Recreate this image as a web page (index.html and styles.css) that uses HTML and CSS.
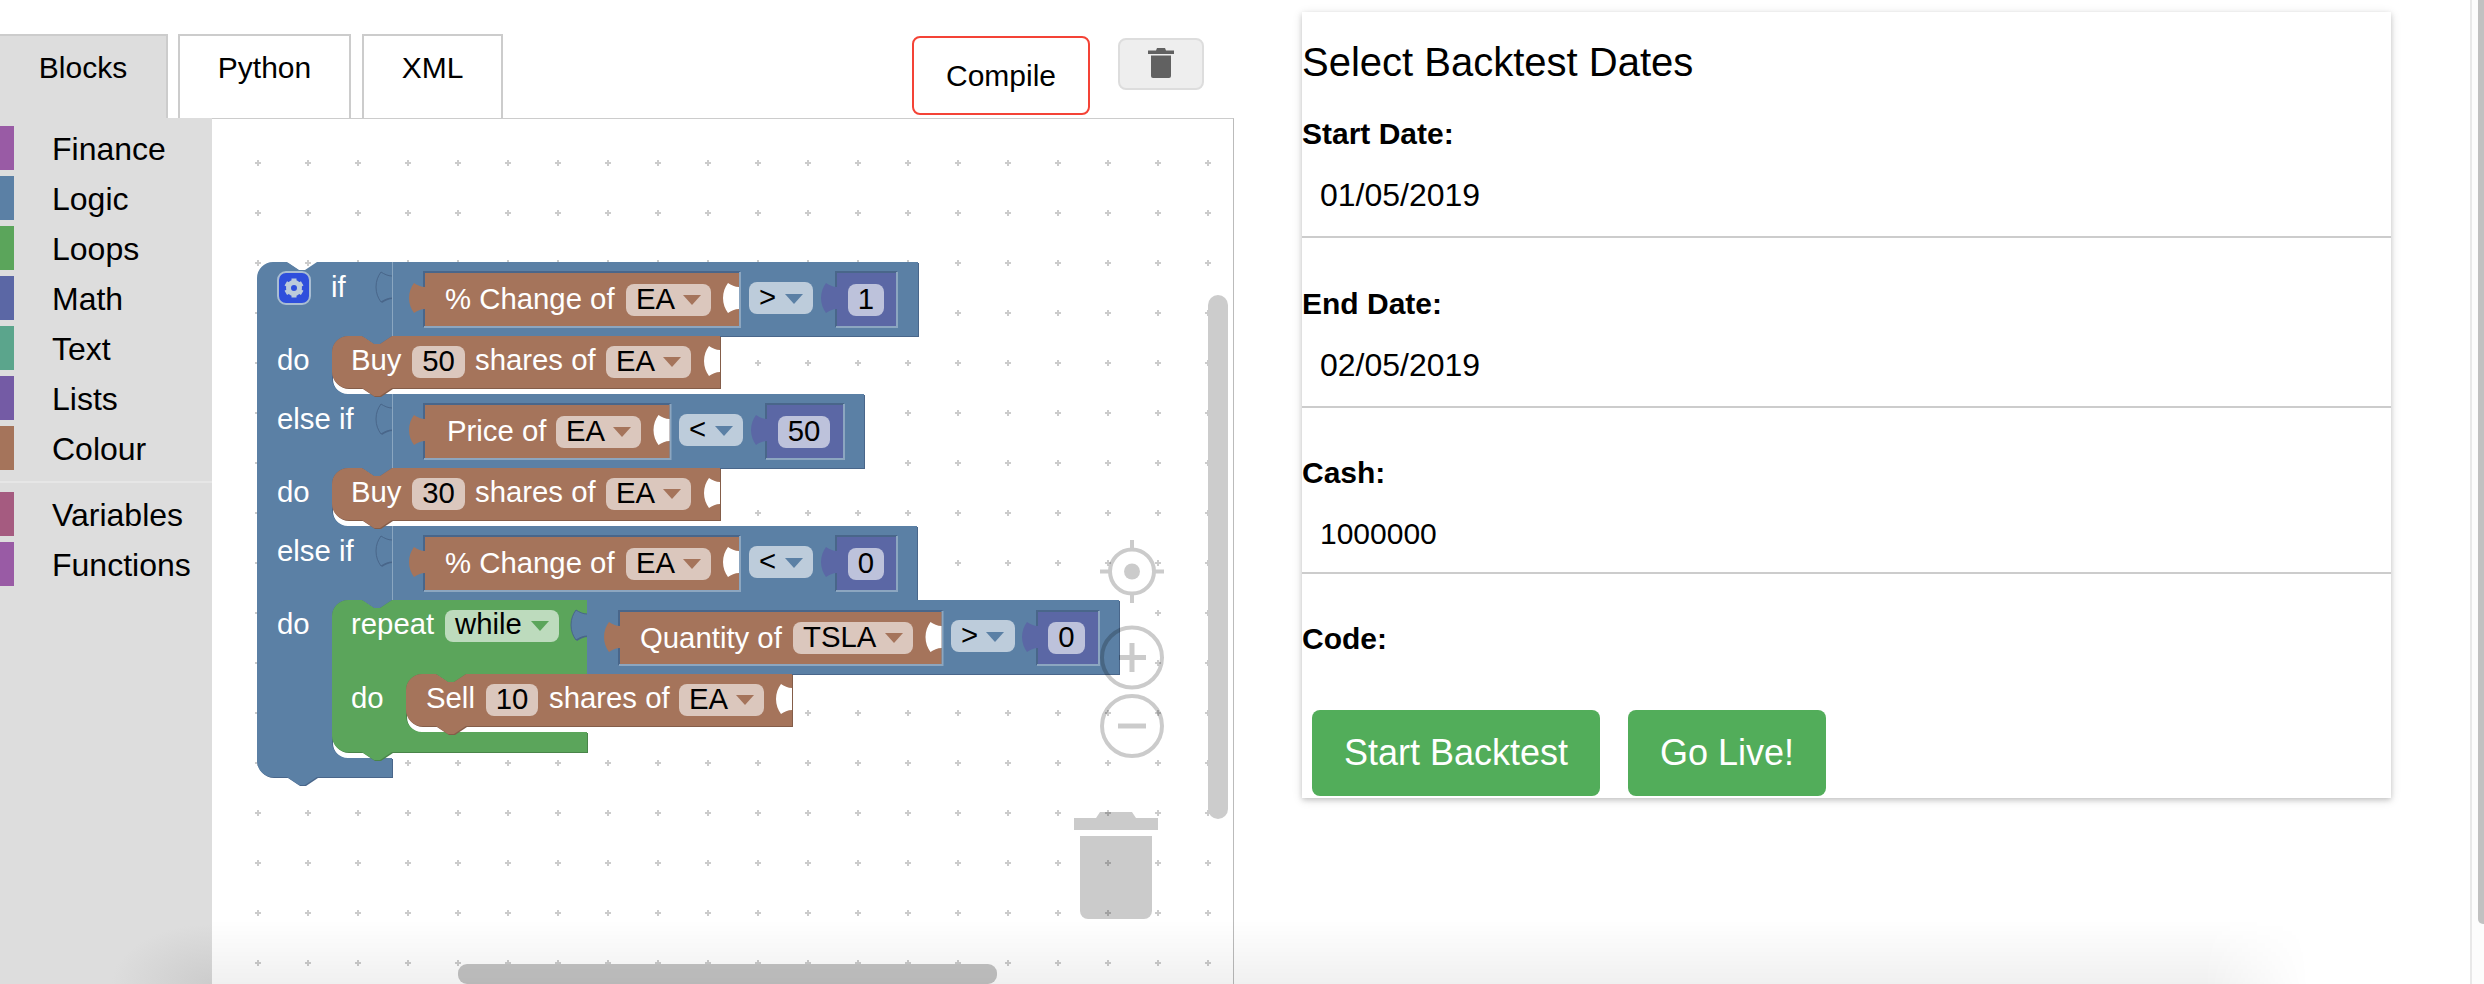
FILE: index.html
```html
<!DOCTYPE html>
<html lang="en">
<head>
<meta charset="utf-8">
<title>Select Backtest Dates</title>
<link rel="stylesheet" href="styles.css">
</head>
<body>
<div class="page">
  <section class="editor">
    <div class="tabbar">
      <div class="tab tab-blocks">Blocks</div>
      <div class="tab tab-python">Python</div>
      <div class="tab tab-xml">XML</div>
      <button class="compile">Compile</button>
      <button class="clear">
        <svg class="clear-icon" viewBox="0 0 26 30"><path d="M0 2.5h8l1-2.5h8l1 2.5h8v3.5H0z"/><path d="M3 7.500h20v20.500a2 2 0 0 1-2 2H5a2 2 0 0 1-2-2z"/></svg>
      </button>
    </div>
    <div class="editor-body">
      <nav class="toolbox">
        <div class="cat"><span class="swatch c-finance"></span><span class="cat-label">Finance</span></div>
        <div class="cat"><span class="swatch c-logic"></span><span class="cat-label">Logic</span></div>
        <div class="cat"><span class="swatch c-loops"></span><span class="cat-label">Loops</span></div>
        <div class="cat"><span class="swatch c-math"></span><span class="cat-label">Math</span></div>
        <div class="cat"><span class="swatch c-text"></span><span class="cat-label">Text</span></div>
        <div class="cat"><span class="swatch c-lists"></span><span class="cat-label">Lists</span></div>
        <div class="cat"><span class="swatch c-colour"></span><span class="cat-label">Colour</span></div>
        <div class="cat-sep"></div>
        <div class="cat"><span class="swatch c-variables"></span><span class="cat-label">Variables</span></div>
        <div class="cat"><span class="swatch c-finance"></span><span class="cat-label">Functions</span></div>
      </nav>
      <div class="workspace">
        <svg class="canvas" viewBox="212 119 1021 865" width="1021" height="865">
          <defs>
            <pattern id="grid" patternUnits="userSpaceOnUse" x="233" y="138" width="50" height="50">
              <path class="grid-dot" d="M22 25h6M25 22v6"/>
            </pattern>
          </defs>
          <rect x="212" y="119" width="1021" height="865" fill="url(#grid)"/>

          <!-- if / else-if spine -->
          <path class="blk blue" d="M257 278a16 16 0 0 1 16-16h14l12 8h6l12-8H392V336l-12 8h-6l-12-8H348a16 16 0 0 0-16 16V378a16 16 0 0 0 16 16H392V468l-12 8h-6l-12-8H348a16 16 0 0 0-16 16V510a16 16 0 0 0 16 16H392V600l-12 8h-6l-12-8H348a16 16 0 0 0-16 16V742a16 16 0 0 0 16 16H392V777H317l-12 8h-6l-12-8H273a16 16 0 0 1-16-16z"/>

          <!-- compare blocks -->
          <path class="blk blue" d="M392 262H918V336H392V298c-4 0-8 2-11 4c-3-4-5-9-5-15c0-6 2-11 5-15c3 2 7 4 11 4z"/>
          <path class="blk blue" d="M392 394H864V468H392V430c-4 0-8 2-11 4c-3-4-5-9-5-15c0-6 2-11 5-15c3 2 7 4 11 4z"/>
          <path class="blk blue" d="M392 526H917V600H392V562c-4 0-8 2-11 4c-3-4-5-9-5-15c0-6 2-11 5-15c3 2 7 4 11 4z"/>
          <path class="edge" d="M392 298c-4 0-8 2-11 4c-3-4-5-9-5-15c0-6 2-11 5-15c3 2 7 4 11 4M392 430c-4 0-8 2-11 4c-3-4-5-9-5-15c0-6 2-11 5-15c3 2 7 4 11 4M392 562c-4 0-8 2-11 4c-3-4-5-9-5-15c0-6 2-11 5-15c3 2 7 4 11 4"/>
          <path class="seam" d="M392.500 262V336M392.500 394V468M392.500 526V600"/>

          <!-- do: Buy 50 -->
          <path class="blk brown" d="M332 352a16 16 0 0 1 16-16h14l12 8h6l12-8H720V388H392l-12 8h-6l-12-8H348a16 16 0 0 1-16-16z"/>
          <path class="hole" d="M720 372c-4 0-8 2-11 4c-3-4-5-9-5-15c0-6 2-11 5-15c3 2 7 4 11 4z"/>
          <!-- do: Buy 30 -->
          <path class="blk brown" d="M332 484a16 16 0 0 1 16-16h14l12 8h6l12-8H720V520H392l-12 8h-6l-12-8H348a16 16 0 0 1-16-16z"/>
          <path class="hole" d="M720 504c-4 0-8 2-11 4c-3-4-5-9-5-15c0-6 2-11 5-15c3 2 7 4 11 4z"/>

          <!-- repeat while -->
          <path class="blk green" d="M332 616a16 16 0 0 1 16-16h14l12 8h6l12-8H587V674H466l-12 8h-6l-12-8H422a16 16 0 0 0-16 16V716a16 16 0 0 0 16 16H587V752H392l-12 8h-6l-12-8H348a16 16 0 0 1-16-16z"/>
          <path class="blk blue" d="M587 600H1119V674H587V636c-4 0-8 2-11 4c-3-4-5-9-5-15c0-6 2-11 5-15c3 2 7 4 11 4z"/>
          <path class="edge" d="M587 636c-4 0-8 2-11 4c-3-4-5-9-5-15c0-6 2-11 5-15c3 2 7 4 11 4"/>
          <path class="blk brown" d="M406 690a16 16 0 0 1 16-16h14l12 8h6l12-8H792V726H466l-12 8h-6l-12-8H422a16 16 0 0 1-16-16z"/>
          <path class="hole" d="M792 710c-4 0-8 2-11 4c-3-4-5-9-5-15c0-6 2-11 5-15c3 2 7 4 11 4z"/>

          <!-- sockets: dark top/left, light bottom/right -->
          <path class="sock-d" d="M424 327V272H740M836 327V272H897M424 459V404H670.500M766 459V404H844M424 591V536H740M836 591V536H897M619 665V611H942.500M1037 665V611H1099"/>
          <path class="sock-l" d="M740 272V327H424M897 272V327H836M670.500 404V459H424M844 404V459H766M740 536V591H424M897 536V591H836M942.500 611V665H619M1099 611V665H1037"/>

          <!-- value blocks -->
          <path class="brown" d="M425 273H739V326H425V309c-4 0-8 2-11 4c-3-4-5-9-5-15c0-6 2-11 5-15c3 2 7 4 11 4z"/>
          <path class="hole" d="M739 309c-4 0-8 2-11 4c-3-4-5-9-5-15c0-6 2-11 5-15c3 2 7 4 11 4z"/>
          <path class="math" d="M837 273H896V326H837V309c-4 0-8 2-11 4c-3-4-5-9-5-15c0-6 2-11 5-15c3 2 7 4 11 4z"/>
          <path class="brown" d="M425 405H669.500V458H425V441c-4 0-8 2-11 4c-3-4-5-9-5-15c0-6 2-11 5-15c3 2 7 4 11 4z"/>
          <path class="hole" d="M669.500 441c-4 0-8 2-11 4c-3-4-5-9-5-15c0-6 2-11 5-15c3 2 7 4 11 4z"/>
          <path class="math" d="M767 405H843V458H767V441c-4 0-8 2-11 4c-3-4-5-9-5-15c0-6 2-11 5-15c3 2 7 4 11 4z"/>
          <path class="brown" d="M425 537H739V590H425V573c-4 0-8 2-11 4c-3-4-5-9-5-15c0-6 2-11 5-15c3 2 7 4 11 4z"/>
          <path class="hole" d="M739 573c-4 0-8 2-11 4c-3-4-5-9-5-15c0-6 2-11 5-15c3 2 7 4 11 4z"/>
          <path class="math" d="M837 537H896V590H837V573c-4 0-8 2-11 4c-3-4-5-9-5-15c0-6 2-11 5-15c3 2 7 4 11 4z"/>
          <path class="brown" d="M620 612H941.500V664H620V648c-4 0-8 2-11 4c-3-4-5-9-5-15c0-6 2-11 5-15c3 2 7 4 11 4z"/>
          <path class="hole" d="M941.500 648c-4 0-8 2-11 4c-3-4-5-9-5-15c0-6 2-11 5-15c3 2 7 4 11 4z"/>
          <path class="math" d="M1038 612H1098V664H1038V648c-4 0-8 2-11 4c-3-4-5-9-5-15c0-6 2-11 5-15c3 2 7 4 11 4z"/>

          <!-- mutator -->
          <rect class="gear-box" x="278" y="272" width="32" height="32" rx="8"/>
          <g class="gear">
            <path d="M294 278.500v19M285.800 283.300l16.400 9.500M285.800 292.800l16.400-9.500"/>
            <circle class="gear-ring" cx="294" cy="288" r="5.500"/>
          </g>

          <!-- labels -->
          <text class="lbl" x="331" y="296">if</text>
          <text class="lbl" x="277" y="369">do</text>
          <text class="lbl" x="277" y="428">else if</text>
          <text class="lbl" x="277" y="501">do</text>
          <text class="lbl" x="277" y="560">else if</text>
          <text class="lbl" x="277" y="633">do</text>

          <!-- row 1 -->
          <text class="lbl" x="445" y="308">% Change of</text>
          <rect class="f-brown" x="626" y="284" width="85" height="32" rx="8"/>
          <text class="val" x="636" y="308">EA</text>
          <path class="brown" d="M683 295h18l-9 10z"/>
          <rect class="f-blue" x="749" y="282" width="64" height="32" rx="8"/>
          <text class="val" x="759" y="306">&gt;</text>
          <path class="blue" d="M785 294h18l-9 10z"/>
          <rect class="f-math" x="848" y="284" width="36" height="32" rx="8"/>
          <text class="val mid" x="866" y="308">1</text>

          <!-- Buy 50 -->
          <text class="lbl" x="351" y="369">Buy</text>
          <rect class="f-brown" x="412" y="346" width="53" height="32" rx="8"/>
          <text class="val mid" x="438.500" y="370">50</text>
          <text class="lbl" x="475" y="369">shares of</text>
          <rect class="f-brown" x="606" y="346" width="85" height="32" rx="8"/>
          <text class="val" x="616" y="370">EA</text>
          <path class="brown" d="M663 357h18l-9 10z"/>

          <!-- row 2 -->
          <text class="lbl" x="447" y="440">Price of</text>
          <rect class="f-brown" x="556" y="416" width="85" height="32" rx="8"/>
          <text class="val" x="566" y="440">EA</text>
          <path class="brown" d="M613 427h18l-9 10z"/>
          <rect class="f-blue" x="679" y="414" width="64" height="32" rx="8"/>
          <text class="val" x="689" y="438">&lt;</text>
          <path class="blue" d="M715 426h18l-9 10z"/>
          <rect class="f-math" x="778" y="416" width="52" height="32" rx="8"/>
          <text class="val mid" x="804" y="440">50</text>

          <!-- Buy 30 -->
          <text class="lbl" x="351" y="501">Buy</text>
          <rect class="f-brown" x="412" y="478" width="53" height="32" rx="8"/>
          <text class="val mid" x="438.500" y="502">30</text>
          <text class="lbl" x="475" y="501">shares of</text>
          <rect class="f-brown" x="606" y="478" width="85" height="32" rx="8"/>
          <text class="val" x="616" y="502">EA</text>
          <path class="brown" d="M663 489h18l-9 10z"/>

          <!-- row 3 -->
          <text class="lbl" x="445" y="572">% Change of</text>
          <rect class="f-brown" x="626" y="548" width="85" height="32" rx="8"/>
          <text class="val" x="636" y="572">EA</text>
          <path class="brown" d="M683 559h18l-9 10z"/>
          <rect class="f-blue" x="749" y="546" width="64" height="32" rx="8"/>
          <text class="val" x="759" y="570">&lt;</text>
          <path class="blue" d="M785 558h18l-9 10z"/>
          <rect class="f-math" x="848" y="548" width="36" height="32" rx="8"/>
          <text class="val mid" x="866" y="572">0</text>

          <!-- repeat -->
          <text class="lbl" x="351" y="633">repeat</text>
          <rect class="f-green" x="445" y="610" width="114" height="32" rx="8"/>
          <text class="val" x="455" y="633">while</text>
          <path class="green" d="M531 621h18l-9 10z"/>
          <text class="lbl" x="640" y="647">Quantity of</text>
          <rect class="f-brown" x="793" y="622" width="120" height="32" rx="8"/>
          <text class="val" x="803" y="646">TSLA</text>
          <path class="brown" d="M885 633h18l-9 10z"/>
          <rect class="f-blue" x="951" y="620" width="64" height="32" rx="8"/>
          <text class="val" x="961" y="644">&gt;</text>
          <path class="blue" d="M986 632h18l-9 10z"/>
          <rect class="f-math" x="1048" y="622" width="37" height="32" rx="8"/>
          <text class="val mid" x="1066.500" y="646">0</text>

          <!-- Sell -->
          <text class="lbl" x="351" y="707">do</text>
          <text class="lbl" x="426" y="707">Sell</text>
          <rect class="f-brown" x="486" y="684" width="52" height="32" rx="8"/>
          <text class="val mid" x="512" y="708">10</text>
          <text class="lbl" x="549" y="707">shares of</text>
          <rect class="f-brown" x="679" y="684" width="85" height="32" rx="8"/>
          <text class="val" x="689" y="708">EA</text>
          <path class="brown" d="M736 695h18l-9 10z"/>

          <!-- zoom controls -->
          <g class="controls">
            <circle class="ring" cx="1132" cy="571.500" r="22"/>
            <path class="ring" d="M1132 540v10M1132 593v10M1100 571.500h10M1154 571.500h10"/>
            <circle class="fill" cx="1132" cy="571.500" r="8"/>
          </g>
          <g class="controls">
            <circle class="ring" cx="1132" cy="657.500" r="30"/>
            <path class="ring thick" d="M1119 657.500h27M1132 643v29"/>
          </g>
          <g class="controls">
            <circle class="ring" cx="1132" cy="726" r="30"/>
            <path class="ring thick" d="M1118 726h28"/>
          </g>
          <!-- trash -->
          <g class="controls">
            <path class="fill" d="M1074 818h22l4-6h32l4 6h22v12h-84z"/>
            <path class="fill" d="M1080 836h72v75a8 8 0 0 1-8 8h-56a8 8 0 0 1-8-8z"/>
          </g>

          <!-- scrollbars -->
          <rect class="sb-v" x="1208" y="295" width="20" height="524" rx="10"/>
          <rect class="sb-h" x="458" y="964" width="539" height="20" rx="9"/>
        </svg>
      </div>
    </div>
  </section>

  <section class="card">
    <h2 class="card-title">Select Backtest Dates</h2>
    <div class="field first">
      <div class="field-label">Start Date:</div>
      <div class="field-value">01/05/2019</div>
    </div>
    <div class="field second">
      <div class="field-label">End Date:</div>
      <div class="field-value">02/05/2019</div>
    </div>
    <div class="field">
      <div class="field-label">Cash:</div>
      <div class="field-value number">1000000</div>
    </div>
    <div class="field bare">
      <div class="field-label">Code:</div>
    </div>
    <div class="actions">
      <button class="go go-start">Start Backtest</button>
      <button class="go go-live">Go Live!</button>
    </div>
  </section>

  <aside class="page-scroll"><div class="page-thumb"></div></aside>
  <div class="fade"></div>
</div>
</body>
</html>
```

FILE: styles.css
```css
* { box-sizing: border-box; }
html, body { margin: 0; padding: 0; height: 984px; overflow: hidden; background: #fff; }
body { font-family: "Liberation Sans", Arial, sans-serif; color: #000; }

.page { position: relative; display: flex; height: 984px; overflow: hidden; }

/* left editor */
.editor { width: 1234px; display: flex; flex-direction: column; flex: none; }
.tabbar { height: 118px; padding-top: 34px; display: flex; align-items: flex-start; }
.tab { height: 84px; font-size: 30px; line-height: 34px; padding-top: 15px; text-align: center; border: 2px solid #ccc; border-bottom: 0; }
.tab-blocks { width: 168px; background: #ddd; border-left: 0; }
.tab-python { width: 173px; margin-left: 10px; }
.tab-xml { width: 141px; margin-left: 11px; }
.compile { width: 178px; height: 79px; margin: 2px 0 0 409px; background: #fff; border: 2px solid #f44336; border-radius: 8px; font: 30px "Liberation Sans", Arial, sans-serif; color: #000; padding: 0; }
.clear { width: 86px; height: 52px; margin: 4px 0 0 28px; background: #eee; border: 2px solid #ddd; border-radius: 8px; padding: 0; display: flex; justify-content: center; align-items: flex-start; }
.clear-icon { width: 26px; height: 30px; margin-top: 8px; fill: #616161; }

.editor-body { flex: 1; display: flex; min-height: 0; }
.toolbox { width: 212px; flex: none; padding-top: 8px; background: radial-gradient(ellipse 100px 60px at 100% 100%, #ccc, #ddd) #ddd; }
.cat { display: flex; height: 44px; margin-bottom: 6px; }
.swatch { width: 14px; flex: none; }
.cat-label { margin-left: 38px; font-size: 32px; line-height: 46px; }
.cat-sep { height: 2px; margin: 11px 0 9px; background: #e6e6e6; }
.c-finance { background: #995ba5; }
.c-logic { background: #5b80a5; }
.c-loops { background: #5ba55b; }
.c-math { background: #5b67a5; }
.c-text { background: #5ba58c; }
.c-lists { background: #745ba5; }
.c-colour { background: #a5745b; }
.c-variables { background: #a55b80; }

.workspace { flex: 1; border-top: 1px solid #ccc; border-right: 1px solid #bbb; background: #fff; min-width: 0; }
.canvas { display: block; }
.canvas text { font-family: "Liberation Sans", Arial, sans-serif; font-size: 29.33px; transform: translateY(1px); }
.grid-dot { stroke: #ccc; stroke-width: 2; fill: none; }
.blue { fill: #5b80a5; }
.brown { fill: #a5745b; }
.green { fill: #5ba55b; }
.math { fill: #5b67a5; }
.blk.blue { filter: drop-shadow(1px 1px 0 #49668a); }
.blk.brown { filter: drop-shadow(1px 1px 0 #845d49); }
.blk.green { filter: drop-shadow(1px 1px 0 #498449); }
.hole { fill: #fff; }
.edge { fill: none; stroke: #49668a; stroke-width: 1; }
.seam { fill: none; stroke: #8aa6c0; stroke-width: 1; }
.sock-d { fill: none; stroke: #49668a; stroke-width: 2; }
.sock-l { fill: none; stroke: #8ca6c0; stroke-width: 2; }
.lbl { fill: #fff; }
.val { fill: #000; }
.mid { text-anchor: middle; }
.f-brown { fill: #dbc7bd; }
.f-blue { fill: #bdccdb; }
.f-math { fill: #bdc2db; }
.f-green { fill: #bddbbd; }
.gear-box { fill: #2f4fdc; stroke: #a9bdd2; stroke-width: 2; }
.gear path { stroke: #bccbdb; stroke-width: 5; fill: none; }
.gear-ring { fill: #2f4fdc; stroke: #bccbdb; stroke-width: 5; }
.controls { opacity: .2; }
.ring { fill: none; stroke: #000; stroke-width: 4; }
.thick { stroke-width: 5; }
.fill { fill: #000; }
.sb-v { fill: #ccc; }
.sb-h { fill: #c4c4c4; }

/* right card */
.card { width: 1089px; height: 786px; margin: 12px 0 0 68px; flex: none; background: #fff; padding-top: 27px; box-shadow: 0 2px 5px 0 rgba(0,0,0,.16), 0 2px 10px 0 rgba(0,0,0,.12); }
.card-title { margin: 0; font-size: 40px; font-weight: 400; line-height: 46px; }
.field { margin-top: 48px; }
.field.first { margin-top: 32px; }
.field.second { margin-top: 49px; }
.field-label { font-size: 30px; font-weight: 700; line-height: 34px; }
.field-value { margin-top: 26px; padding: 0 0 23px 18px; border-bottom: 2px solid #ccc; font-size: 32px; line-height: 36px; }
.field-value.number { font-size: 30px; padding-bottom: 20px; }
.actions { display: flex; gap: 28px; margin: 54px 0 0 10px; }
.go { height: 86px; padding: 0; border: 0; border-radius: 8px; background: #52ad5a; color: #fff; font: 36px "Liberation Sans", Arial, sans-serif; }
.go-start { width: 288px; }
.go-live { width: 198px; }

/* window chrome */
.page-scroll { margin-left: auto; width: 14px; flex: none; height: 984px; border-left: 2px solid #e8e8e8; background: #fcfcfc; padding-left: 6px; }
.page-thumb { width: 6px; height: 924px; background: #c1c1c1; border-bottom-left-radius: 5px; }
.fade { position: absolute; left: 212px; right: 175px; top: 920px; bottom: 0; pointer-events: none; background: linear-gradient(rgba(0,0,0,0), rgba(0,0,0,.06)); -webkit-mask-image: linear-gradient(to right, #000 95%, transparent); mask-image: linear-gradient(to right, #000 95%, transparent); }
```
